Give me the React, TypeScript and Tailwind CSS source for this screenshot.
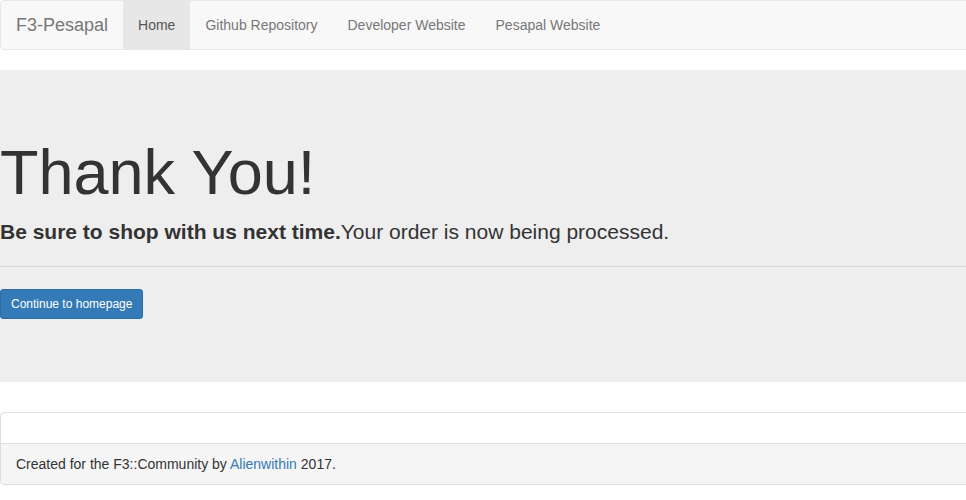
import React from "react";

export default function App() {
  const font = { fontFamily: '"Liberation Sans", Arial, Helvetica, sans-serif' };
  return (
    <div className="w-full overflow-hidden bg-white text-[#333] text-[14px] leading-[20px]" style={font}>
      <div className="w-[1000px]">
        <nav className="h-[50px] mb-[20px] bg-[#f8f8f8] border border-[#e7e7e7] rounded-[4px] flex items-stretch">
          <a className="px-[15px] flex items-center text-[18px] leading-[20px] text-[#777]">F3-Pesapal</a>
          <a className="px-[15px] flex items-center text-[#555] bg-[#e7e7e7]">Home</a>
          <a className="px-[15px] flex items-center text-[#777]">Github Repository</a>
          <a className="px-[15px] flex items-center text-[#777]">Developer Website</a>
          <a className="px-[15px] flex items-center text-[#777]">Pesapal Website</a>
        </nav>
        <div className="bg-[#eee] pt-[48px] pb-[48px] mb-[30px]">
          <h1 className="mt-[20px] mb-[10px] text-[63px] leading-[1.1] font-normal text-[#333]">Thank You!</h1>
          <p className="text-[21px] leading-[30px] mb-[15px]">
            <strong className="font-bold">Be sure to shop with us next time.</strong>Your order is now being processed.
          </p>
          <hr className="mt-[19px] mb-[22px] border-0 border-t border-[#d6d6d6]" />
          <div className="h-[30px] mb-[15px]">
            <a className="inline-block h-[30px] px-[10px] py-[5px] text-[12px] leading-[18px] text-white bg-[#337ab7] border border-[#2e6da4] rounded-[3px]">
              Continue to homepage
            </a>
          </div>
        </div>
        <div className="border border-[#ddd] rounded-[4px] bg-white mb-[20px]">
          <div className="h-[30px]"></div>
          <div className="bg-[#f5f5f5] border-t border-[#ddd] px-[15px] py-[10px] rounded-b-[3px]">
            Created for the F3::Community by <a className="text-[#337ab7]">Alienwithin</a> 2017.
          </div>
        </div>
      </div>
    </div>
  );
}
